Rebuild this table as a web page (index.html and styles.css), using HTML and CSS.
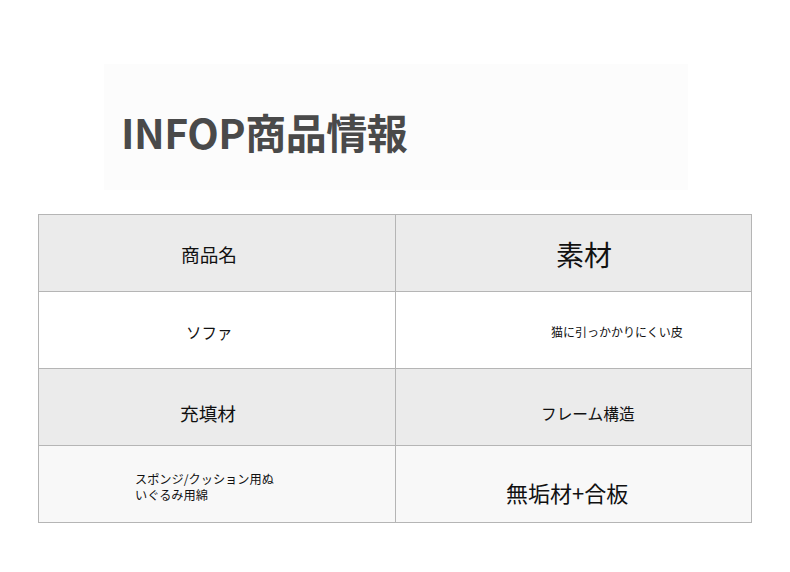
FILE: index.html
```html
<!DOCTYPE html>
<html lang="ja">
<head>
<meta charset="utf-8">
<link rel="stylesheet" href="styles.css">
</head>
<body>
<div class="page">
  <div class="hero">
    <h1 class="title">INFOP商品情報</h1>
  </div>
  <table class="spec">
    <tr class="row-head">
      <td class="cell c1"><span class="t-name">商品名</span></td>
      <td class="cell c2"><span class="t-material">素材</span></td>
    </tr>
    <tr class="row-white">
      <td class="cell c1"><span class="t-sofa">ソファ</span></td>
      <td class="cell c2"><span class="t-leather">猫に引っかかりにくい皮</span></td>
    </tr>
    <tr class="row-head">
      <td class="cell c1"><span class="t-fill">充填材</span></td>
      <td class="cell c2"><span class="t-frame">フレーム構造</span></td>
    </tr>
    <tr class="row-light">
      <td class="cell c1"><span class="t-sponge"><span class="line">スポンジ/クッション用ぬ</span><span class="line">いぐるみ用綿</span></span></td>
      <td class="cell c2"><span class="t-wood">無垢材+合板</span></td>
    </tr>
  </table>
</div>
</body>
</html>
```
FILE: styles.css
```css
html, body {
  margin: 0;
  padding: 0;
  background: #ffffff;
}
body {
  font-family: "Noto Sans CJK JP", "Noto Sans", sans-serif;
  color: #111;
}
.page {
  width: 790px;
  height: 572px;
  padding-top: 64px;
  box-sizing: border-box;
}
.hero {
  margin-left: 104px;
  width: 584px;
  height: 126px;
  background: #fcfcfc;
  display: flex;
  align-items: center;
  padding-left: 17px;
  box-sizing: border-box;
}
.title {
  margin: 0;
  font-size: 41px;
  font-weight: 700;
  color: #4a4a4a;
  line-height: 1;
  padding-top: 8px;
  letter-spacing: -0.5px;
}
.spec {
  margin-top: 24px;
  margin-left: 38px;
  border-collapse: collapse;
  width: 714px;
  table-layout: fixed;
}
.cell {
  border: 1px solid #b5b5b5;
  height: 76px;
  padding: 0;
  vertical-align: middle;
  text-align: left;
  line-height: 1.3;
}
.c1 { width: 356px; }
.row-head .cell { background: #ebebeb; }
.row-white .cell { background: #ffffff; }
.row-light .cell { background: #f8f8f8; }

.cell > span { display: inline-block; }
.t-name { font-size: 18.7px; margin-left: 142px; padding-top: 2px; }
.t-material { font-size: 28px; margin-left: 160px; padding-top: 3px; }
.t-sofa { font-size: 15.5px; margin-left: 147px; padding-top: 4px; }
.t-leather { font-size: 12px; margin-left: 155px; }
.t-fill { font-size: 18.7px; margin-left: 141px; padding-top: 12px; }
.t-frame { font-size: 15.7px; margin-left: 145px; padding-top: 14px; }
.t-sponge {
  font-size: 12.2px;
  margin-left: 96px;
  padding-top: 7px;
  display: flex;
  flex-direction: column;
  gap: 0;
}
.t-sponge .line { display: block; line-height: 16.5px; }
.t-wood { font-size: 22px; margin-left: 110px; padding-top: 17px; }
```
